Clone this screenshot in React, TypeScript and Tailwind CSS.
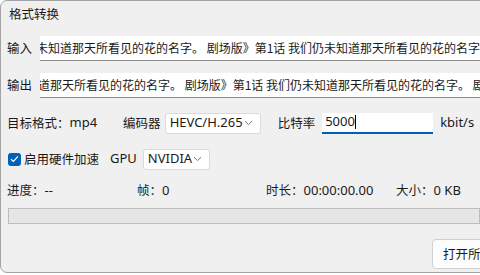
import React from "react";

const cjk = "font-['Noto_Sans_CJK_SC',sans-serif] text-[12.5px]";
const lat = "font-['Noto_Sans','Noto_Sans_CJK_SC',sans-serif] text-[13px]";

function Chevron() {
  return (
    <svg width="9" height="6" viewBox="0 0 9 6" className="ml-auto">
      <path d="M1 1.2 L4.5 4.6 L8 1.2" fill="none" stroke="#777" strokeWidth="1" />
    </svg>
  );
}

function PathInput({ text, shift }: { text: string; shift: string }) {
  return (
    <div className="flex-1 h-[25px] bg-white border-b border-[#8b8b8b] overflow-hidden whitespace-nowrap flex items-center">
      <span className={`font-['Noto_Sans_CJK_SC',sans-serif] text-[12px] text-[#1a1a1a] ${shift}`}>{text}</span>
    </div>
  );
}

export default function App() {
  const name = "我们仍未知道那天所看见的花的名字。 剧场版》第1话 我们仍未知道那天所看见的花的名字。 剧场版";
  return (
    <div className="w-[480px] h-[275px] bg-white">
      <div className="w-[481px] h-[273px] bg-[#f0f0f0] border border-[#a3a3a3] rounded-l-[7px] overflow-hidden flex flex-col text-[#1a1a1a]">
        <div className={`h-[27px] pl-[8px] flex items-center ${cjk}`}>格式转换</div>

        <div className="pl-[6px] flex flex-col">
          <div className="mt-[8px] flex items-center">
            <span className={`${cjk} w-[33px]`}>输入</span>
            <PathInput text={name.slice(3)} shift="ml-[-4px]" />
          </div>
          <div className="mt-[12px] flex items-center">
            <span className={`${cjk} w-[33px]`}>输出</span>
            <PathInput text={name.slice(5)} shift="ml-[-2px]" />
          </div>

          <div className="mt-[14px] h-[22px] flex items-center">
            <span className={cjk}>目标格式：</span>
            <span className={lat}>mp4</span>
            <span className={`${cjk} ml-[26px]`}>编码器</span>
            <div className="ml-[4px] w-[96px] h-[21px] bg-white border border-[#dadada] rounded-[3px] flex items-center pl-[4px] pr-[7px]">
              <span className={lat}>HEVC/H.265</span>
              <Chevron />
            </div>
            <span className={`${cjk} ml-[17px]`}>比特率</span>
            <div className="ml-[7px] w-[111px] h-[21px] bg-white border-b-2 border-[#005fb8] flex items-center pl-[3px]">
              <span className={lat}>5000</span>
              <span className="w-px h-[14px] bg-black" />
            </div>
            <span className={`${lat} ml-[7px]`}>kbit/s</span>
          </div>

          <div className="mt-[14px] h-[22px] flex items-center">
            <span className="ml-[1px] w-[13px] h-[13px] rounded-[3px] bg-[#005fb8] flex items-center justify-center">
              <svg width="9" height="8" viewBox="0 0 9 8">
                <path d="M1 4.2 L3.4 6.4 L8 1.4" fill="none" stroke="white" strokeWidth="1.2" />
              </svg>
            </span>
            <span className={`${cjk} ml-[3px]`}>启用硬件加速</span>
            <span className={`${lat} ml-[11px]`}>GPU</span>
            <div className="ml-[6px] w-[67px] h-[21px] bg-white border border-[#dadada] rounded-[3px] flex items-center pl-[4px] pr-[7px]">
              <span className={lat}>NVIDIA</span>
              <Chevron />
            </div>
          </div>

          <div className="mt-[9px] h-[20px] flex items-center">
            <span className="w-[130px]">
              <span className={cjk}>进度：</span>
              <span className={lat}>--</span>
            </span>
            <span className="w-[129px]">
              <span className={cjk}>帧：</span>
              <span className={lat}>0</span>
            </span>
            <span className="w-[130px]">
              <span className={cjk}>时长：</span>
              <span className={lat}>00:00:00.00</span>
            </span>
            <span>
              <span className={cjk}>大小：</span>
              <span className={lat}>0 KB</span>
            </span>
          </div>

          <div className="mt-[9px] ml-[1px] h-[16px] bg-[#e6e6e6] border border-[#bcbcbc]" />

          <div className="mt-[15px] flex justify-end">
            <div className="mr-[-10px] w-[58px] h-[30px] bg-[#fdfdfd] border border-[#d0d0d0] rounded-[4px] flex items-center pl-[10px] overflow-hidden whitespace-nowrap">
              <span className={cjk}>打开所在</span>
            </div>
          </div>
        </div>
      </div>
    </div>
  );
}
